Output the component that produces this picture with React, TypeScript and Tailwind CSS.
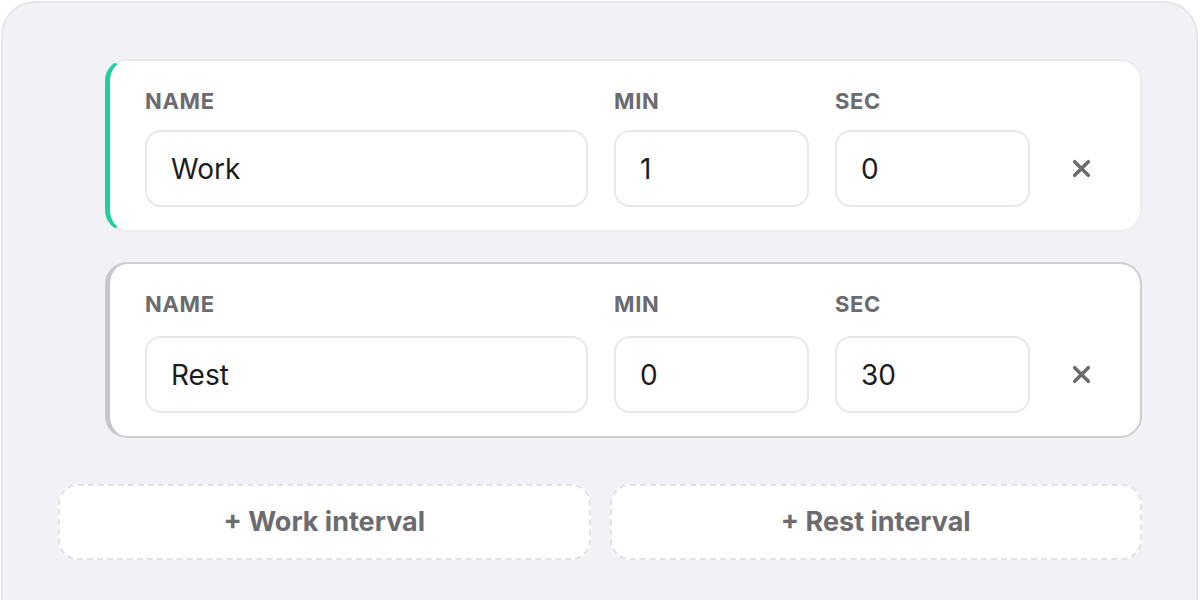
import { useState } from "react";

type Interval = {
  id: number;
  kind: "work" | "rest";
  name: string;
  min: string;
  sec: string;
};

const labelBase =
  "block text-[22px] font-bold uppercase leading-[26px] tracking-[0.03em] text-[#6b6b70]";

const inputClass =
  "h-[77px] w-full rounded-[16px] border-2 border-[#e8e8ec] bg-white px-[24px] text-[28px] text-[#1c1c1e] outline-none focus:border-[#1fcf9f]";

function XIcon() {
  return (
    <svg width="21" height="21" viewBox="0 0 20 20" fill="none">
      <path
        d="M3.5 3.5 16.5 16.5M16.5 3.5 3.5 16.5"
        stroke="#6b6b70"
        strokeWidth="3.4"
        strokeLinecap="round"
      />
    </svg>
  );
}

function IntervalCard({
  item,
  onChange,
  onRemove,
}: {
  item: Interval;
  onChange: (field: "name" | "min" | "sec", value: string) => void;
  onRemove: () => void;
}) {
  const isWork = item.kind === "work";
  const labelClass = `${labelBase} ${isWork ? "mb-[16px]" : "mb-[19px]"}`;
  return (
    <div
      className={`ml-[47px] grid grid-cols-[minmax(0,1fr)_195px_195px_50px] items-end gap-x-[26px] rounded-[22px] border-2 border-l-[5px] bg-white pb-[23px] pl-[35px] pr-[34px] pt-[27px] ${
        isWork
          ? "border-[#ececf0] border-l-[#1fcf9f]"
          : "border-[#cdcdd2] border-l-[#c6c6cb]"
      }`}
    >
      <div>
        <label className={labelClass}>Name</label>
        <input
          value={item.name}
          onChange={(e) => onChange("name", e.target.value)}
          className={inputClass}
        />
      </div>
      <div>
        <label className={labelClass}>Min</label>
        <input
          value={item.min}
          onChange={(e) => onChange("min", e.target.value)}
          className={inputClass}
        />
      </div>
      <div>
        <label className={labelClass}>Sec</label>
        <input
          value={item.sec}
          onChange={(e) => onChange("sec", e.target.value)}
          className={inputClass}
        />
      </div>
      <button
        type="button"
        onClick={onRemove}
        className="flex h-[77px] items-center justify-center"
        aria-label="Remove interval"
      >
        <XIcon />
      </button>
    </div>
  );
}

export default function App() {
  const [items, setItems] = useState<Interval[]>([
    { id: 1, kind: "work", name: "Work", min: "1", sec: "0" },
    { id: 2, kind: "rest", name: "Rest", min: "0", sec: "30" },
  ]);

  const update = (id: number, field: "name" | "min" | "sec", value: string) => {
    setItems((prev) => prev.map((it) => (it.id === id ? { ...it, [field]: value } : it)));
  };

  const add = (kind: "work" | "rest") => {
    setItems((prev) => [
      ...prev,
      {
        id: Date.now(),
        kind,
        name: kind === "work" ? "Work" : "Rest",
        min: kind === "work" ? "1" : "0",
        sec: kind === "work" ? "0" : "30",
      },
    ]);
  };

  return (
    <div
      className="h-[600px] overflow-hidden bg-white pl-px pr-[2px] pt-px"
      style={{ fontFamily: "Inter, 'Noto Sans', sans-serif" }}
    >
      <div className="min-h-[700px] rounded-t-[34px] border-2 border-b-0 border-[#e6e6ea] bg-[#f2f2f6] pl-[55px] pr-[54px] pt-[56px]">
        <div className="flex flex-col gap-[30px]">
          {items.map((item) => (
            <IntervalCard
              key={item.id}
              item={item}
              onChange={(field, value) => update(item.id, field, value)}
              onRemove={() => setItems((prev) => prev.filter((it) => it.id !== item.id))}
            />
          ))}
        </div>

        <div className="mt-[46px] grid grid-cols-2 gap-[19px]">
          <button
            type="button"
            onClick={() => add("work")}
            className="h-[76px] rounded-[20px] border-2 border-dashed border-[#e2e2e6] bg-white text-[27px] font-bold text-[#6b6b70]"
          >
            + Work interval
          </button>
          <button
            type="button"
            onClick={() => add("rest")}
            className="h-[76px] rounded-[20px] border-2 border-dashed border-[#e2e2e6] bg-white text-[27px] font-bold text-[#6b6b70]"
          >
            + Rest interval
          </button>
        </div>
      </div>
    </div>
  );
}
